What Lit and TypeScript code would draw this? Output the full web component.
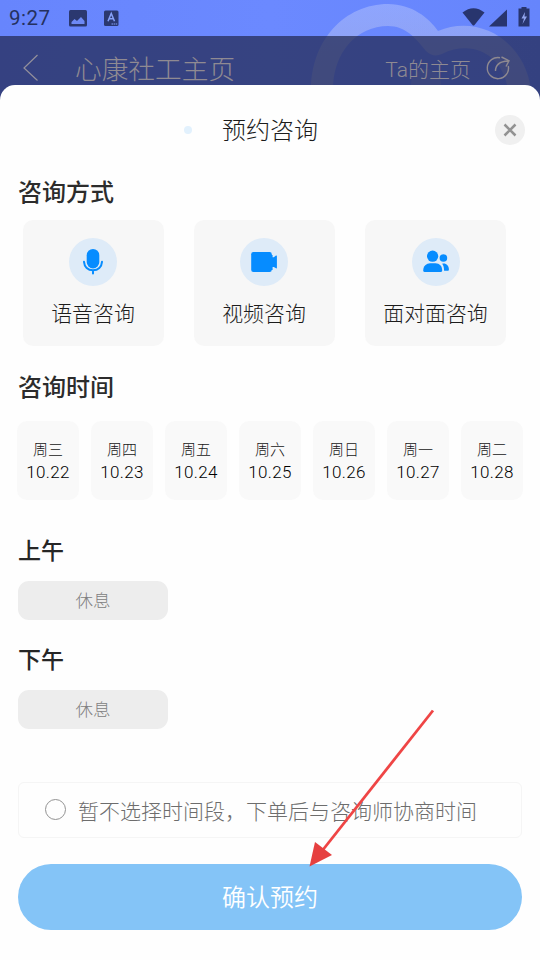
import { LitElement, html, svg, css } from "lit";
import { customElement } from "lit/decorators.js";

const icons = {
  voice: svg`<rect x="17.7" y="11" width="12.6" height="19.4" rx="6.3" fill="#068cff"/>
    <path d="M15 23.8c.4 5 3.800 8.500 9 8.500s8.600-3.500 9-8.500M24 32.500v3" fill="none" stroke="#068cff" stroke-width="2" stroke-linecap="round"/>`,
  video: svg`<rect x="11.200" y="14" width="20.600" height="20" rx="2.200" fill="#068cff"/>
    <path d="M31 17h1.600v2.200h1.200L36 17.600q.9-.4.900.6v11.600q0 .9-.9.500L33.800 29h-1.200v3H31z" fill="#068cff"/>`,
  people: svg`<g fill="#068cff"><circle cx="20.600" cy="18.200" r="5.600"/><circle cx="31.400" cy="20" r="3.800"/>
    <path d="M11.200 32.500c0-4.400 3.200-7.300 7-7.300h5.300c4 0 6.700 3 6.700 7.300 0 .9-.4 1.400-1.300 1.400H12.500c-.9 0-1.300-.5-1.300-1.400z"/>
    <path d="M30.200 25.700c3.800-.9 6.700 1.900 6.700 5.500 0 1-.4 1.500-1.300 1.500h-3.500c-.1-3-.5-5.100-1.900-7z"/></g>`,
};

const methods = [
  { label: "语音咨询", icon: icons.voice },
  { label: "视频咨询", icon: icons.video },
  { label: "面对面咨询", icon: icons.people },
];

const days = [
  ["周三", "10.22"],
  ["周四", "10.23"],
  ["周五", "10.24"],
  ["周六", "10.25"],
  ["周日", "10.26"],
  ["周一", "10.27"],
  ["周二", "10.28"],
];

@customElement("app-root")
export class AppRoot extends LitElement {
  static styles = css`
    :host {
      display: flex;
      flex-direction: column;
      position: relative;
      width: 540px;
      height: 960px;
      overflow: hidden;
      background: linear-gradient(90deg, #6785fd, #6b89ff 50%, #6685fc);
      font-family: Roboto, "Noto Sans CJK SC", sans-serif;
      font-weight: 300;
      color: #1c1c1c;
    }
    * { box-sizing: border-box; }
    svg { display: block; flex: none; }
    .heart { position: absolute; left: 0; top: 0; }
    .status {
      position: relative;
      flex: none;
      display: flex;
      align-items: center;
      height: 36px;
      padding: 0 9px;
      color: #25315f;
    }
    .clock { width: 60px; font-size: 20.500px; font-weight: 400; line-height: 37px; letter-spacing: 0.500px; }
    .badge { margin-left: 17px; }
    .fill { flex: 1; }
    .nav {
      position: relative;
      flex: none;
      display: flex;
      height: 64px;
      padding: 0 29px 0 22px;
      background: rgba(32, 38, 78, 0.71);
      color: #8f8a92;
      line-height: 66px;
    }
    .nav-title { margin-left: 35px; font-size: 26.700px; line-height: 69px; }
    .home { font-size: 21px; line-height: 68px; margin-right: 15px; }
    .back, .share { margin-top: 17px; }
    .sheet {
      position: relative;
      flex: 1;
      display: flex;
      flex-direction: column;
      margin-top: -15px;
      padding: 0 18px 30px;
      border-radius: 15px 15px 0 0;
      background: #fefefe;
    }
    .sheet-head {
      flex: none;
      display: grid;
      grid-template-columns: 1fr auto 1fr;
      align-items: center;
      height: 90px;
      margin-right: -3px;
      margin-left: -3px;
    }
    .dot { justify-self: end; width: 8px; height: 8px; margin-right: 30px; border-radius: 50%; background: #e2f1fd; }
    .title { padding-top: 2px; font-size: 24px; line-height: 36px; }
    .close {
      display: grid;
      place-items: center;
      justify-self: end;
      width: 30px;
      height: 30px;
      border-radius: 50%;
      background: #f0f0f0;
    }
    .heading { flex: none; height: 36px; font-size: 24px; line-height: 40px; font-weight: 500; color: #2c2c2c; }
    .first { margin-top: -2px; }
    .methods { display: flex; gap: 30px; margin: 11px 0 0 5px; }
    .method {
      display: flex;
      flex-direction: column;
      align-items: center;
      width: 141px;
      height: 126px;
      padding: 18px 1px 0 0;
      border-radius: 10px;
      background: #f7f7f7;
    }
    .method:last-child { padding-right: 0; }
    .bubble { width: 48px; height: 48px; border-radius: 50%; background: #deebf8; }
    .label { margin-top: 12px; font-size: 20.900px; line-height: 32px; white-space: nowrap; }
    .second { margin-top: 22px; }
    .days { display: flex; justify-content: space-between; margin: 17px -1px 0; }
    .day {
      width: 62px;
      height: 79px;
      padding-top: 18px;
      border-radius: 10px;
      background: #f9f9f9;
      text-align: center;
      color: #161616;
    }
    .week { font-size: 15px; line-height: 22px; }
    .date { font-size: 17px; font-weight: 350; line-height: 22px; letter-spacing: 0.35px; color: #000; }
    .period { flex: none; height: 34px; font-size: 23px; line-height: 38px; font-weight: 500; color: #262626; }
    .am { margin-top: 33px; }
    .pm { margin-top: 22px; }
    .rest {
      flex: none;
      width: 150px;
      height: 39px;
      margin-top: 14px;
      border-radius: 11px;
      background: #ededed;
      color: #808080;
      font-size: 17.500px;
      line-height: 41px;
      text-align: center;
    }
    .later {
      flex: none;
      display: flex;
      align-items: center;
      height: 56px;
      margin-top: 53px;
      padding-left: 26px;
      border: 1px solid #f5f5f5;
      border-radius: 6px;
      color: #6d6d6d;
      font-size: 21px;
      white-space: nowrap;
    }
    .radio { width: 21px; height: 21px; margin: -1px 12px 0 0; border: 1px solid #929292; border-radius: 50%; }
    .confirm {
      flex: none;
      height: 66px;
      margin-top: 26px;
      padding: 2px 0 0;
      border: 0;
      border-radius: 33px;
      background: #84c4f7;
      color: #fff;
      font: inherit;
      font-size: 24px;
      font-weight: 350;
      line-height: 64px;
    }
    .arrow { position: absolute; left: 300px; top: 700px; }
  `;

  render() {
    return html`
      <svg class="heart" width="540" height="100">
        <defs><linearGradient id="ring" x1="0" y1="0" x2="0" y2="1">
          <stop offset="0" stop-color="#fff" stop-opacity=".25"/><stop offset="1" stop-color="#ffe9b8" stop-opacity=".25"/>
        </linearGradient></defs>
        <path fill="url(#ring)" d="M311 90C311 40 345 4 388 4C412 4 429 18 438 31C478 14 525 40 531 90H508C504 58 475 38 442 54Q433 58 426 51C415 37 405 26 388 26C357 26 333 52 333 90Z"/>
        <circle cx="426" cy="84" r="15" fill="#ffe9b8" fill-opacity=".14"/>
      </svg>
      <div class="status">
        <span class="clock">9:27</span>
        <svg width="18" height="18"><rect y="1" width="18" height="16.500" rx="1.500" fill="#2b3870"/><path d="M2.500 15v-2l3-3 2.500 2 4-4 3.500 4v3z" fill="#6d89f5"/></svg>
        <svg class="badge" width="15" height="18"><rect y="1.500" width="14.500" height="15.500" rx="1.500" fill="#2b3870"/><path d="M4 12.300L7.250 4.500l3.250 7.800M5.200 9.700h4.100" fill="none" stroke="#86a0f8" stroke-width="1.500"/><path d="M7.500 15h6" stroke="#86a0f8" stroke-dasharray="1.500 .6"/></svg>
        <span class="fill"></span>
        <svg width="70" height="36"><g fill="#28356e"><path d="M1.500 12.500Q12.500 4 23.500 12.500L13.500 25q-1 1-2 0z"/><path d="M46 9.500V26.500H28z"/><path d="M60.500 8.500v-1.500h5v1.500h3v18H57.500V8.500z"/></g><path d="M64 12L60.500 18.500H63L61.500 24l4.500-7.500H63.500z" fill="#92a5ee"/></svg>
      </div>
      <div class="nav">
        <svg class="back" width="18" height="32"><path d="M15.500 2L2 15l13.500 12.500" fill="none" stroke="#93909b" stroke-width="1.200"/></svg>
        <span class="nav-title">心康社工主页</span>
        <span class="fill"></span>
        <span class="home">Ta的主页</span>
        <svg class="share" width="25" height="30"><path d="M14 4.700A10.600 10.600 0 1 0 22.300 13M9.500 18c0-5 3-9.500 12.500-10M15.500 4L23 7.700 20 13.500" fill="none" stroke="#8e8990" stroke-width="1.400"/></svg>
      </div>
      <div class="sheet">
        <div class="sheet-head">
          <i class="dot"></i>
          <span class="title">预约咨询</span>
          <span class="close"><svg width="14" height="14"><path d="M1.500 1.500l11 11m0-11l-11 11" stroke="#929292" stroke-width="2.500"/></svg></span>
        </div>
        <div class="heading first">咨询方式</div>
        <div class="methods">
          ${methods.map((m) => html`<div class="method"><div class="bubble"><svg width="48" height="48">${m.icon}</svg></div><span class="label">${m.label}</span></div>`)}
        </div>
        <div class="heading second">咨询时间</div>
        <div class="days">
          ${days.map(([w, d]) => html`<div class="day"><div class="week">${w}</div><div class="date">${d}</div></div>`)}
        </div>
        <div class="period am">上午</div>
        <div class="rest">休息</div>
        <div class="period pm">下午</div>
        <div class="rest">休息</div>
        <div class="later"><i class="radio"></i>暂不选择时间段，下单后与咨询师协商时间</div>
        <button class="confirm">确认预约</button>
      </div>
      <svg class="arrow" width="145" height="175"><path d="M133 10.500L22 151" stroke="#ef4545" stroke-width="2.800"/><path d="M9.500 166.500L15 142 32 155z" fill="#e64040"/></svg>
    `;
  }
}
